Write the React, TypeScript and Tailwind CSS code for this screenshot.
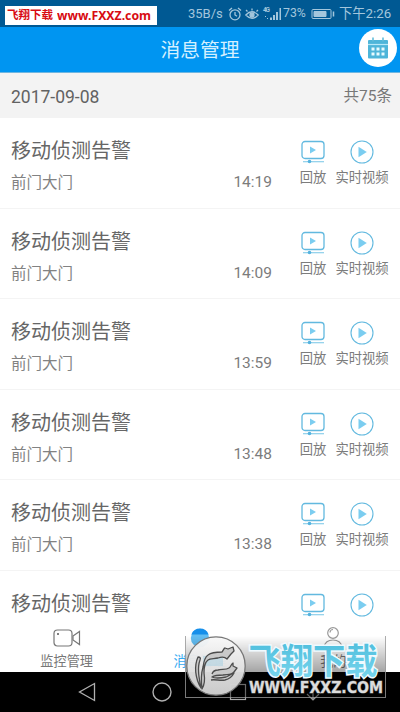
import { clsx } from 'clsx';

interface Alarm {
  title: string;
  place: string;
  time: string;
}

const alarms: Alarm[] = [
  { title: '移动侦测告警', place: '前门大门', time: '14:19' },
  { title: '移动侦测告警', place: '前门大门', time: '14:09' },
  { title: '移动侦测告警', place: '前门大门', time: '13:59' },
  { title: '移动侦测告警', place: '前门大门', time: '13:48' },
  { title: '移动侦测告警', place: '前门大门', time: '13:38' },
];

function ReplayIcon() {
  return (
    <svg width="24" height="24" viewBox="0 0 24 24" fill="none" stroke="#62b9df" strokeWidth="1.3">
      <rect x="1" y="1.5" width="22" height="17" rx="3" />
      <path d="M9 6.5v7l6-3.5z" fill="#7bcdf0" stroke="none" />
      <path d="M2 21.7h21" stroke="#8ccfea" strokeWidth="1.2" />
      <circle cx="8.5" cy="21.5" r="1.8" fill="#55b3df" stroke="none" />
    </svg>
  );
}

function LiveIcon() {
  return (
    <svg width="24" height="24" viewBox="0 0 24 24" fill="none" stroke="#62b9df" strokeWidth="1.1">
      <circle cx="12" cy="12" r="11" />
      <path d="M8.5 6.8v10.4l8.3-5.2z" fill="#7bcdf0" stroke="none" />
    </svg>
  );
}

function StatusBar() {
  return (
    <div className="relative h-[27px] bg-[#005993] text-[#a3c6dc]">
      <div className="absolute left-[5px] top-[6px] flex h-[19px] w-[152px] items-center bg-white text-[#d80b12]">
        <span className="ml-[2px] w-[50px] whitespace-nowrap text-[11.5px] font-bold">飞翔下载</span>
        <svg width="96" height="18" viewBox="0 0 96 18">
          <text x="0" y="13" textLength="94" lengthAdjust="spacingAndGlyphs" fontFamily="'Noto Sans'" fontSize="12" fontWeight="700" fill="currentColor">www.FXXZ.com</text>
        </svg>
      </div>
      <div className="flex h-full items-center justify-end pr-[9px] text-[13px]">
        <span className="w-[36px] whitespace-nowrap">35B/s</span>
        <svg className="ml-[4px]" width="14" height="14" viewBox="0 0 14 14" fill="none" stroke="currentColor" strokeWidth="1.3">
          <circle cx="7" cy="7.8" r="5" />
          <path d="M7 5v3l2 1.2M1 3.5l3-2.5M13 3.5l-3-2.5" />
        </svg>
        <svg className="ml-[3px]" width="14" height="14" viewBox="0 0 14 14" fill="none" stroke="currentColor" strokeWidth="1.3">
          <path d="M.8 8Q7 1.5 13.2 8 7 14.5.8 8zM2.5 4.5L1 3M11.5 4.5L13 3M7 3.5V1.5" />
          <circle cx="7" cy="8" r="2" fill="currentColor" />
        </svg>
        <svg className="ml-[3px]" width="21" height="15" viewBox="0 0 21 15" fill="currentColor">
          <text x="1" y="6" fontSize="6.5" fontWeight="700" textLength="7">4G</text>
          <path d="M3 10h1v1H3zM5 12h1v1H5zM8 11.5h2V14H8zM11 9h2v5h-2zM14 6h2v8h-2zM17.5 2h1.5v12h-1.5z" />
        </svg>
        <span className="w-[24px] whitespace-nowrap text-[12.3px]">73%</span>
        <svg className="ml-[4px]" width="24" height="12" viewBox="0 0 24 12" fill="none" stroke="currentColor">
          <rect x="1" y="1.5" width="19" height="9" rx="1" />
          <path d="M3 3.5h12v5H3z" fill="currentColor" />
          <path d="M22.5 3.5v5" strokeWidth="1.5" />
        </svg>
        <span className="ml-[4px] w-[52px] whitespace-nowrap text-right text-[13.3px]">下午2:26</span>
      </div>
    </div>
  );
}

function Header() {
  return (
    <div className="relative flex h-[45px] items-center justify-center bg-[#0095f1]">
      <h1 className="pt-[2px] text-[19.8px] text-[#d4f0ff]">消息管理</h1>
      <div className="absolute right-[3px] top-[2px] flex size-[38px] items-center justify-center rounded-full bg-white">
        <svg width="20" height="22" viewBox="0 0 20 22">
          <rect x="0" y="3" width="20" height="18.5" rx="1" fill="#4eb5d9" />
          <path d="M0 7.5h20" stroke="#b9e9f8" strokeWidth="1.2" />
          <path d="M5 .5v4M15 .5v4" stroke="#64bdda" strokeWidth="1.6" />
          <path d="M3.5 10.5h3v3h-3zM8.5 10.5h3v3h-3zM13.5 10.5h3v3h-3zM3.5 15.5h3v3h-3zM8.5 15.5h3v3h-3zM13.5 15.5h3v3h-3z" fill="#e8fbff" />
        </svg>
      </div>
    </div>
  );
}

function AlarmRow({ alarm }: { alarm: Alarm }) {
  return (
    <div className="flex h-[90.5px] shrink-0 border-b border-[#f4f4f4] pl-[11px]">
      <div className="w-[182px] pt-[18px]">
        <div className="text-[20px] leading-[30px] text-[#666]">{alarm.title}</div>
        <div className="mt-[6px] text-[15.5px] leading-[22px] text-[#828282]">{alarm.place}</div>
      </div>
      <div className="w-[79px] pt-[53px] text-right text-[15.5px] leading-[22px] text-[#7c7c7c]">{alarm.time}</div>
      <div className="ml-[28px] flex w-[26px] flex-col items-center pt-[22px]">
        <ReplayIcon />
        <span className="mt-[5px] whitespace-nowrap text-[13.3px] leading-[18px] text-[#7c7c7c]">回放</span>
      </div>
      <div className="ml-[9px] flex w-[54px] flex-col items-center pt-[22px]">
        <LiveIcon />
        <span className="mt-[5px] whitespace-nowrap text-[13.3px] leading-[18px] text-[#7c7c7c]">实时视频</span>
      </div>
    </div>
  );
}

const tabs = [
  { label: '监控管理', active: false },
  { label: '消息管理', active: true },
  { label: '我的', active: false },
];

function TabIcon({ index }: { index: number }) {
  if (index === 0) {
    return (
      <svg width="28" height="20" viewBox="0 0 28 20" fill="none" stroke="#777" strokeWidth="1.2">
        <rect x="1" y="2" width="18" height="16" rx="3.5" />
        <path d="M20 8l6.5-4.5v13L20 12z" />
        <circle cx="5" cy="6" r="1" fill="#555" stroke="none" />
      </svg>
    );
  }
  if (index === 1) {
    return (
      <svg width="22" height="20" viewBox="0 0 22 20">
        <circle cx="11" cy="10" r="9.2" fill="#62bdf2" />
        <path d="M2.4 6.5a9.2 9.2 0 0 1 17.2 0z" fill="#168fea" />
      </svg>
    );
  }
  return (
    <svg className="-mt-px" width="22" height="21" viewBox="0 0 22 21" fill="none" stroke="#999" strokeWidth="1.2">
      <circle cx="11" cy="6" r="5.3" />
      <path d="M2 20c1-5 4-7 9-7s8 2 9 7M8 5.5a3 3 0 0 1 3-3" />
    </svg>
  );
}

function TabBar() {
  return (
    <div className="grid h-[50px] grid-cols-3 bg-white">
      {tabs.map((tab, i) => (
        <div key={tab.label} className="flex flex-col items-center pt-[6px]">
          <TabIcon index={i} />
          <span className={clsx('mt-[5px] text-[13.2px] leading-[18px]', tab.active ? 'text-[#35aaf0]' : 'text-[#777]')}>
            {tab.label}
          </span>
        </div>
      ))}
    </div>
  );
}

function SystemNav() {
  return (
    <div className="flex h-10 items-center bg-black pl-[78px] text-[#b0b0b0]">
      <svg width="18" height="20" viewBox="0 0 18 20" fill="none" stroke="currentColor" strokeWidth="1.3">
        <path d="M16.5 1.5v17L1.5 10z" />
      </svg>
      <svg className="ml-[56px]" width="20" height="20" viewBox="0 0 20 20" fill="none" stroke="currentColor" strokeWidth="1.4">
        <circle cx="10" cy="10" r="9" />
      </svg>
      <svg className="ml-[57px]" width="18" height="18" viewBox="0 0 18 18" fill="none" stroke="#aaa" strokeWidth="1.2">
        <rect x="1.5" y="1.5" width="15" height="15" />
      </svg>
      <svg className="ml-[57px]" width="18" height="20" viewBox="0 0 18 20" fill="none" stroke="#999" strokeWidth="1.2">
        <path d="M9 1v17M3 12l6 6 6-6" />
      </svg>
    </div>
  );
}

// Site stamp lying over the bottom right corner
function Stamp() {
  return (
    <div className="absolute left-[185px] top-[636px] h-[62px] w-[201px] border border-t-0 border-[#999]/80 bg-linear-to-b from-black/0 from-0% via-black/35 via-58% to-black/40">
      <svg className="absolute -left-px top-0 overflow-visible" width="201" height="62" viewBox="0 0 201 62">
        <defs>
          <linearGradient id="disc" x1="0" y1="0" x2="0" y2="1">
            <stop offset="0" stopColor="#f8f8f8" />
            <stop offset="1" stopColor="#d2d2d2" />
          </linearGradient>
          <linearGradient id="name" x1="0" y1="0" x2="0" y2="1">
            <stop offset="0" stopColor="#45b9d9" />
            <stop offset="1" stopColor="#7dd8ef" />
          </linearGradient>
        </defs>
        <circle cx="31" cy="30" r="29.2" fill="url(#disc)" fillOpacity="0.96" stroke="#777" strokeWidth="1.3" />
        <path d="M18 20h20v10H18z" fill="#9dcbe0" opacity="0.45" />
        <g fill="#c9c9c9" stroke="#4c4c4c" strokeWidth="1.3" strokeLinejoin="round">
          <path d="M13 21c-4 9-3 21 3 31-2-10-4-20-1-28 1-2 0-3-2-3z" />
          <path d="M17 53c-1-8-1-15 1-22 1-7 2-10 5-12 4-3 9-3 14-3 1-1 2-4 3-4l3 1 5-2 1 4-3 3-4 5c-3-3-6-2-9-1-4 1-8 0-10 2-4 3-4 8-4 13 1 6 1 11-2 16z" />
          <path d="M27 38c1-3 3-4 6-4 4-1 8 0 11-2 2-1 2-4 4-5l0 3 4 2-3 4c-3 4-7 2-11 3-4 0-8 0-11 2 4 2 9 1 14 0 3-1 5-3 8-4-2 4-5 6-9 7-5 1-10-1-14 0" />
        </g>
        <text x="63.5" y="37.5" fontFamily="'Noto Sans CJK SC'" fontSize="35" fontWeight="700" textLength="129" lengthAdjust="spacingAndGlyphs" fill="url(#name)" stroke="#f0faff" strokeWidth="3" paintOrder="stroke">飞翔下载</text>
        <text x="64" y="56.5" fontFamily="'DejaVu Sans'" fontSize="15" fontWeight="700" textLength="134" lengthAdjust="spacingAndGlyphs" fill="#dcdcdc" stroke="#666" strokeWidth="1" paintOrder="stroke">WWW.FXXZ.COM</text>
      </svg>
    </div>
  );
}

export default function App() {
  return (
    <div className="relative flex h-[712px] w-[400px] flex-col overflow-hidden bg-white font-['Roboto','Noto_Sans_CJK_SC',sans-serif]">
      <StatusBar />
      <Header />
      <div className="flex h-[46px] items-center justify-between border-t border-[#6eb6e1] bg-[#f3f3f3] pl-[11px] pr-[8px] pt-[3px]">
        <span className="text-[17.5px] text-[#626262]">2017-09-08</span>
        <span className="text-[15.5px] text-[#777]">共75条</span>
      </div>
      <div className="flex h-[504px] flex-col overflow-hidden">
        {alarms.map((alarm) => (
          <AlarmRow key={alarm.time} alarm={alarm} />
        ))}
        {/* the sixth row is cut off by the tab bar */}
        <div className="flex h-[90px] shrink-0 pl-[11px]">
          <div className="w-[182px] pt-[18px] text-[20px] leading-[30px] text-[#666]">移动侦测告警</div>
          <div className="ml-[107px] flex w-[26px] justify-center pt-[22px]">
            <ReplayIcon />
          </div>
          <div className="ml-[9px] flex w-[54px] justify-center pt-[22px]">
            <LiveIcon />
          </div>
        </div>
      </div>
      <TabBar />
      <SystemNav />
      <Stamp />
    </div>
  );
}
